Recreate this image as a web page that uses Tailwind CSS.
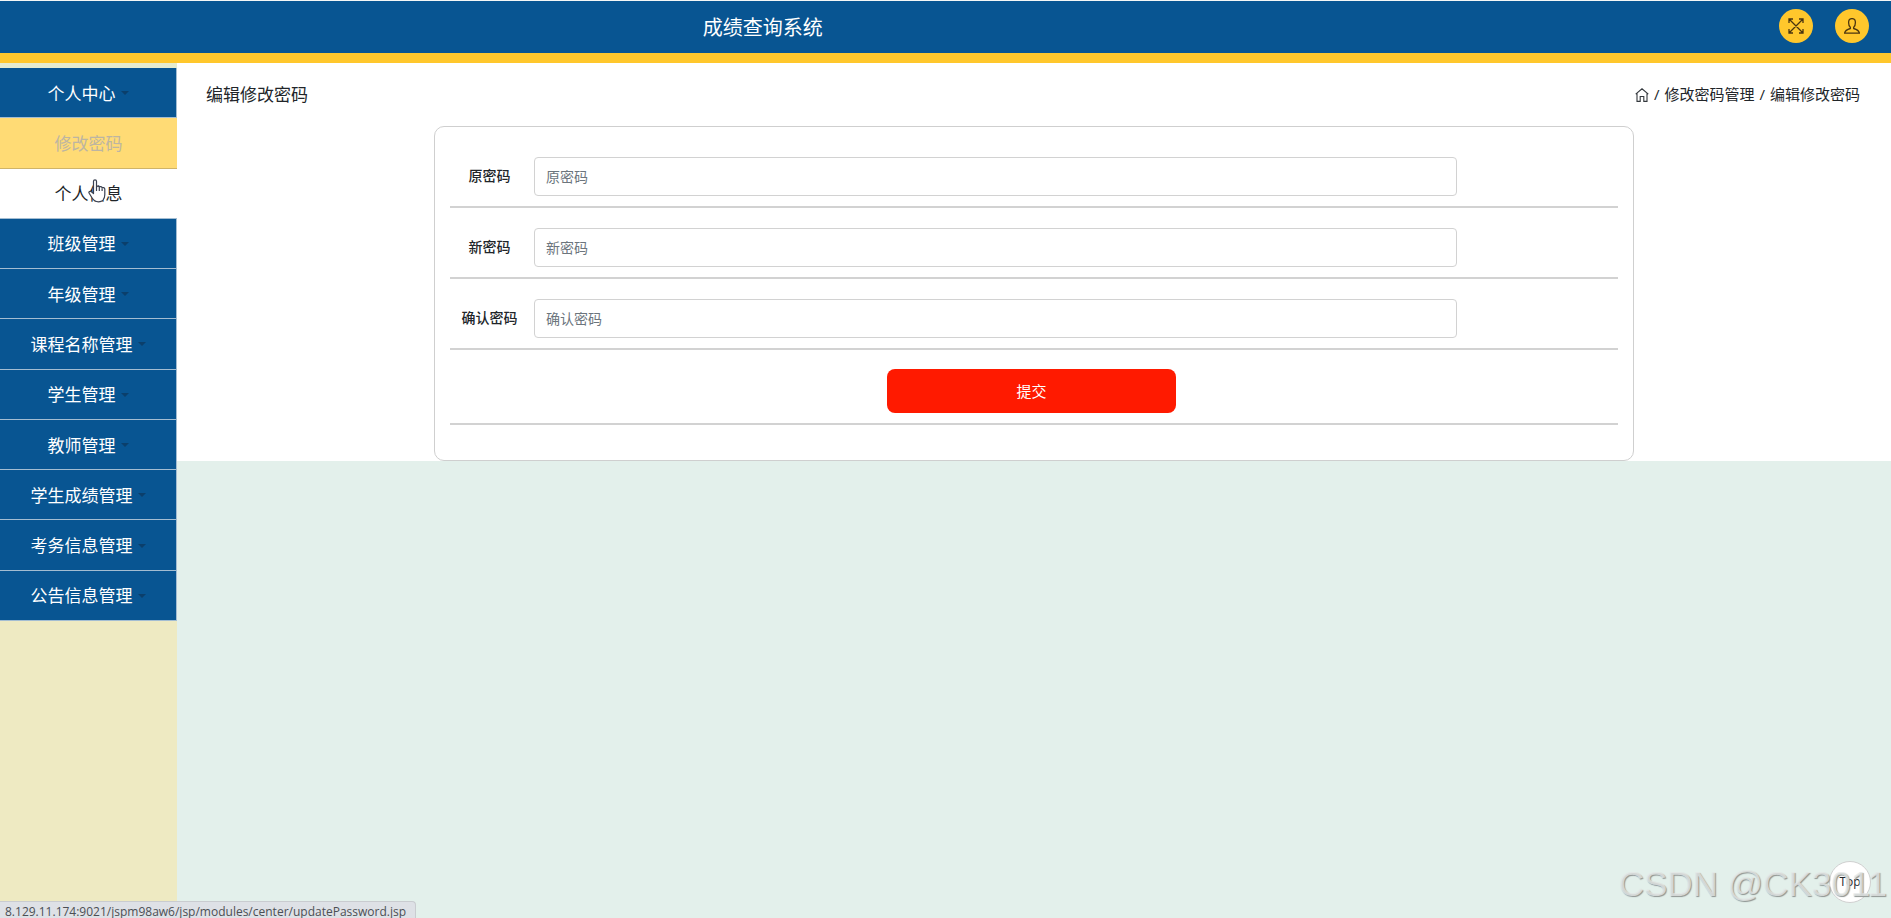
<!DOCTYPE html>
<html lang="zh-CN">
<head>
<meta charset="utf-8">
<meta name="viewport" content="width=device-width, initial-scale=1">
<title>成绩查询系统</title>
<script src="https://cdn.jsdelivr.net/npm/@tailwindcss/browser@4"></script>
</head>
<body class="flex min-h-screen flex-col overflow-hidden border-t border-[#f4f7f6] bg-[#e3f0eb] font-['Open_Sans','Noto_Sans_CJK_SC',sans-serif] text-[#212529]">
  <header class="grid h-[62px] shrink-0 grid-cols-[1fr_auto] items-center border-b-10 border-[#ffc72c] bg-[#085592] pr-[22px]">
    <h1 class="pt-[2px] pl-[39.5%] text-[20px] leading-none text-white">成绩查询系统</h1>
    <div class="flex gap-[22px] pb-[2px]">
      <button type="button" aria-label="全屏" class="flex size-[34px] items-center justify-center rounded-full bg-[#ffc72c]">
        <svg viewBox="0 0 16 16" class="size-4" fill="none" stroke="#4a3510" stroke-width="1.3"><path d="M1.500 1.500l13 13M14.500 1.500l-13 13M1 5V1h4M11 1h4v4M15 11v4h-4M5 15H1v-4"/></svg>
      </button>
      <button type="button" aria-label="用户" class="flex size-[34px] items-center justify-center rounded-full bg-[#ffc72c]">
        <svg viewBox="0 0 16 16" class="size-4" fill="none" stroke="#4a3510" stroke-width="1.3"><path d="M6.300 9.200C5 8.200 4.600 6.500 4.600 4.500 4.600 2 6 .6 8 .6s3.400 1.400 3.400 3.900c0 2-.4 3.700-1.700 4.700v1.300c2.500.7 5.200 1.500 5.700 4.700H.6c.5-3.200 3.200-4 5.700-4.700z"/></svg>
      </button>
    </div>
  </header>

  <div class="flex flex-1">
    <aside class="w-[177px] shrink-0 bg-[#eeeac2]">
      <nav class="border-t-5 border-[#e5ecd0] text-[17px] leading-none" aria-label="主菜单">
        <ul class="grid min-h-[553px] auto-rows-fr">
          <li class="grid"><a href="#" class="flex items-center justify-center gap-[5px] border-r border-b border-[#a3bdd2] bg-[#085592] pt-px text-white">个人中心<span class="border-x-4 border-t-4 border-x-transparent border-t-[#0b3f6b]"></span></a></li>
          <li class="grid"><a href="#" class="flex items-center justify-center border-b border-[#d0b468] bg-[#ffdb75] pt-px text-[#bdb5a2]">修改密码</a></li>
          <li class="grid"><a href="#" class="flex items-center justify-center border-b border-[#a3bdd2] bg-white pt-px text-[#212529]">个人信息</a></li>
          <li class="grid"><a href="#" class="flex items-center justify-center gap-[5px] border-r border-b border-[#a3bdd2] bg-[#085592] pt-px text-white">班级管理<span class="border-x-4 border-t-4 border-x-transparent border-t-[#0b3f6b]"></span></a></li>
          <li class="grid"><a href="#" class="flex items-center justify-center gap-[5px] border-r border-b border-[#a3bdd2] bg-[#085592] pt-px text-white">年级管理<span class="border-x-4 border-t-4 border-x-transparent border-t-[#0b3f6b]"></span></a></li>
          <li class="grid"><a href="#" class="flex items-center justify-center gap-[5px] border-r border-b border-[#a3bdd2] bg-[#085592] pt-px text-white">课程名称管理<span class="border-x-4 border-t-4 border-x-transparent border-t-[#0b3f6b]"></span></a></li>
          <li class="grid"><a href="#" class="flex items-center justify-center gap-[5px] border-r border-b border-[#a3bdd2] bg-[#085592] pt-px text-white">学生管理<span class="border-x-4 border-t-4 border-x-transparent border-t-[#0b3f6b]"></span></a></li>
          <li class="grid"><a href="#" class="flex items-center justify-center gap-[5px] border-r border-b border-[#a3bdd2] bg-[#085592] pt-px text-white">教师管理<span class="border-x-4 border-t-4 border-x-transparent border-t-[#0b3f6b]"></span></a></li>
          <li class="grid"><a href="#" class="flex items-center justify-center gap-[5px] border-r border-b border-[#a3bdd2] bg-[#085592] pt-px text-white">学生成绩管理<span class="border-x-4 border-t-4 border-x-transparent border-t-[#0b3f6b]"></span></a></li>
          <li class="grid"><a href="#" class="flex items-center justify-center gap-[5px] border-r border-b border-[#a3bdd2] bg-[#085592] pt-px text-white">考务信息管理<span class="border-x-4 border-t-4 border-x-transparent border-t-[#0b3f6b]"></span></a></li>
          <li class="grid"><a href="#" class="flex items-center justify-center gap-[5px] border-r border-b border-[#a3bdd2] bg-[#085592] pt-px text-white">公告信息管理<span class="border-x-4 border-t-4 border-x-transparent border-t-[#0b3f6b]"></span></a></li>
        </ul>
      </nav>
    </aside>

    <main class="min-w-0 flex-1">
      <div class="bg-white">
        <div class="flex h-[63px] items-center justify-between pr-[31px] pl-[29px]">
          <h2 class="text-[17px] leading-none">编辑修改密码</h2>
          <nav class="flex items-center gap-[5px] text-[15px] leading-none" aria-label="面包屑">
            <a href="#" aria-label="首页"><svg viewBox="0 0 14 14" class="size-[14px]" fill="none" stroke="#33383d" stroke-width="1.100"><path d="M.7 6.200L7 .8l6.300 5.400M2 5.200v8.200h3.200V8.500h3.600v4.900H12V5.200"/></svg></a>
            <span>/</span><a href="#">修改密码管理</a><span>/</span><span>编辑修改密码</span>
          </nav>
        </div>
        <form class="mx-auto w-[70%] rounded-[10px] border border-[#cfcfcf] px-[15px] pt-[30px] pb-[35px] text-[14px]">
          <div class="flex items-center border-b-2 border-[#d2d2d2] pb-[10px]">
            <label for="old" class="mr-[5px] w-[79px] pb-[2px] text-center font-medium">原密码</label>
            <input id="old" type="password" placeholder="原密码" class="h-[39px] w-[79%] rounded-[4px] border border-[#d2d2d2] px-[11px] placeholder:text-[#6c757d]">
          </div>
          <div class="flex items-center border-b-2 border-[#d2d2d2] pt-[20px] pb-[10px]">
            <label for="new" class="mr-[5px] w-[79px] pb-[2px] text-center font-medium">新密码</label>
            <input id="new" type="password" placeholder="新密码" class="h-[39px] w-[79%] rounded-[4px] border border-[#d2d2d2] px-[11px] placeholder:text-[#6c757d]">
          </div>
          <div class="flex items-center border-b-2 border-[#d2d2d2] pt-[20px] pb-[10px]">
            <label for="confirm" class="mr-[5px] w-[79px] pb-[2px] text-center font-medium">确认密码</label>
            <input id="confirm" type="password" placeholder="确认密码" class="h-[39px] w-[79%] rounded-[4px] border border-[#d2d2d2] px-[11px] placeholder:text-[#6c757d]">
          </div>
          <div class="flex justify-center border-b-2 border-[#d2d2d2] pt-[19px] pr-[5px] pb-[10px]">
            <button type="submit" class="h-[44px] w-[289px] rounded-[8px] bg-[#ff1a00] text-[15px] text-white">提交</button>
          </div>
        </form>
      </div>
    </main>
  </div>

  <svg viewBox="0 0 18 24" class="absolute top-[179px] left-[88px] h-6 w-[18px]" fill="#fff" stroke="#3a4050" stroke-width="1.200" stroke-linejoin="round" aria-hidden="true"><path d="M5.500 14.500V2.200C5.500.4 8.500.4 8.500 2.200V8c.3-1.300 2.800-1 2.800.3.300-1 2.700-.8 2.800.7.400-.8 2.700-.5 2.700 1.200v5.300c0 4.500-2.600 7.300-6.300 7.300-3.500 0-5.200-1.700-6.700-4.300L1.200 14.300c-.9-1.600 1-2.600 2.200-1.500z"/><path d="M8.500 8v4M11.300 8.500v3.500M14.100 9.500v2.500" fill="none"/></svg>
  <div class="absolute bottom-0 left-0 h-[17px] w-[416px] rounded-tr-[4px] border-t border-r border-[#c9ccd0] bg-[#dee1e6] pt-px pl-[5px] text-[12px] leading-[18px] whitespace-nowrap text-[#4b4f54]">8.129.11.174:9021/jspm98aw6/jsp/modules/center/updatePassword.jsp</div>
  <button type="button" class="absolute right-[20px] bottom-[15px] size-[42px] rounded-full border border-[#d0d0d0] bg-white text-[12px]">Top</button>
  <div class="pointer-events-none absolute right-[4px] bottom-[14px] font-['Liberation_Sans',sans-serif] text-[35px] leading-[40px] whitespace-nowrap text-[#e6e9e8]/80 [text-shadow:1px_1px_1px_#8f9593]">CSDN @CK3011</div>
</body>
</html>
